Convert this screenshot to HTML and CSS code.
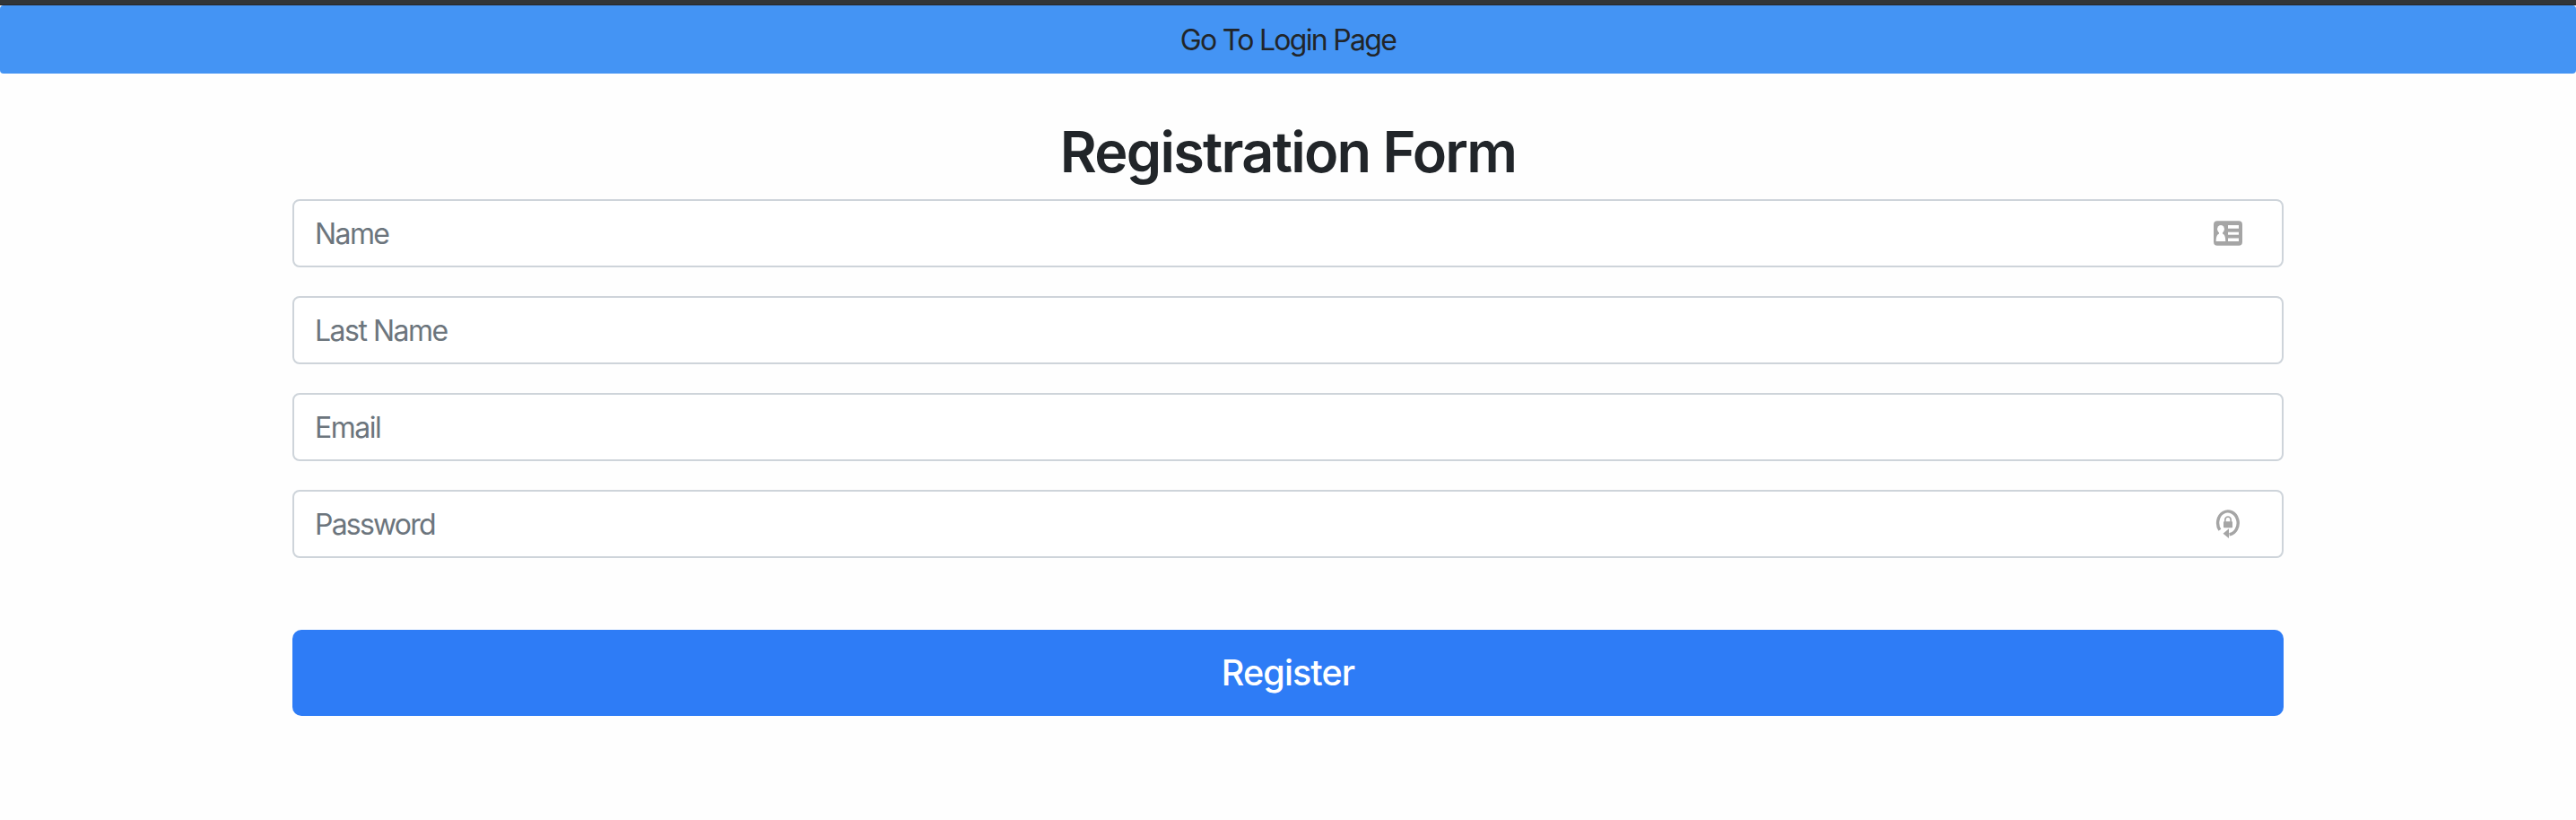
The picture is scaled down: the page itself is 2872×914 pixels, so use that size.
FILE: index.html
```html
<!DOCTYPE html>
<html lang="en">
<head>
<meta charset="utf-8">
<title>Registration Form</title>
<link rel="stylesheet" href="styles.css">
</head>
<body>
<div class="topline"></div>
<a class="login-link"><span>Go To Login Page</span></a>
<main class="container">
  <h1 class="title"><span>Registration Form</span></h1>
  <form class="form">
    <div class="field"><span class="label name">Name</span>
      <svg class="icon" width="32" height="32" viewBox="0 0 32 32">
        <rect x="0" y="2.3" width="32" height="27.4" rx="4" fill="#a5a5a5"/>
        <g fill="#fff"><ellipse cx="8" cy="11.3" rx="3.9" ry="4.4"/><path d="M6 13h4v3.5c2.200 1 3.300 3.500 3.300 8.500H2.700c0-5 1.100-7.500 3.300-8.500z"/>
        <rect x="16" y="7" width="12" height="3.700"/><rect x="16" y="14.700" width="12" height="3"/><rect x="16" y="21.500" width="12" height="3.500"/></g>
      </svg>
    </div>
    <div class="field"><span class="label last-name">Last Name</span></div>
    <div class="field"><span class="label email">Email</span></div>
    <div class="field"><span class="label password">Password</span>
      <svg class="icon" width="32" height="32" viewBox="0 0 32 32">
        <path d="M6.900 22.800A11.300 13 0 1 1 17.500 27.800" fill="none" stroke="#a5a5a5" stroke-width="3.400"/>
        <g fill="#a5a5a5"><path d="M10.500 26.800L17 21.300V32z"/><rect x="11" y="13.300" width="10" height="7" rx=".8"/></g>
        <path d="M12.800 14v-2.600a3.200 3.400 0 0 1 6.400 0V14" fill="none" stroke="#a5a5a5" stroke-width="1.700"/>
      </svg>
    </div>
    <button class="submit" type="button"><span>Register</span></button>
  </form>
</main>
</body>
</html>
```
FILE: styles.css
```css
* { box-sizing: border-box; }
body {
  margin: 0;
  background: #fefefe;
  color: #212529;
  font-family: Inter, "Liberation Sans", sans-serif;
  font-size: 32px;
}
.topline {
  height: 6px;
  background: #313538;
  border-bottom: 1px solid #25282d;
}
.login-link {
  display: flex;
  justify-content: center;
  height: 76px;
  line-height: 77px;
  border-radius: 4px;
  background: #4494f4;
  letter-spacing: -1.7px;
}
.container {
  width: 2220px;
  margin: 48px auto 0;
}
.title {
  margin: 0 0 15px;
  padding-top: 1px;
  font-size: 63px;
  font-weight: 600;
  line-height: 76px;
  text-align: center;
  letter-spacing: -1.75px;
}
.form {
  display: flex;
  flex-direction: column;
  gap: 32px;
}
.field {
  display: flex;
  align-items: center;
  justify-content: space-between;
  height: 76px;
  padding: 0 44px 0 23px;
  border: 2px solid #ced4da;
  border-radius: 8px;
  background: #fff;
}
.label { color: #6c757d; }
.name { letter-spacing: -1.6px; }
.last-name { letter-spacing: -1.5px; }
.email { letter-spacing: -1.5px; }
.password { letter-spacing: -1.8px; }
.icon { display: block; }
.submit {
  height: 96px;
  margin-top: 48px;
  padding: 0;
  border: 0;
  border-radius: 10px;
  background: #2e7cf6;
  color: #fff;
  font: 500 39.5px/97px Inter, "Liberation Sans", sans-serif;
  letter-spacing: -0.9px;
}
```
